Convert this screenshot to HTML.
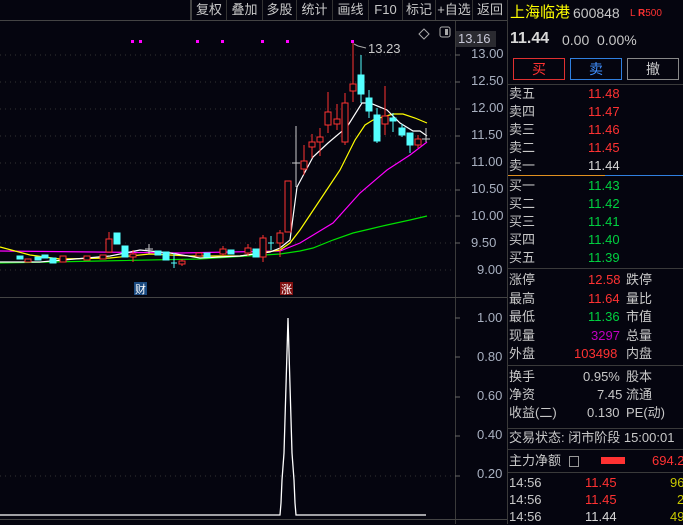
<!DOCTYPE html>
<html><head><meta charset="utf-8"><style>
*{margin:0;padding:0;box-sizing:border-box}
body{width:683px;height:524px;background:#05050f;overflow:hidden;position:relative;font-family:"Liberation Sans","Noto Sans CJK SC",sans-serif;font-size:13px;color:#c8c8c8}
.a{position:absolute;white-space:nowrap;line-height:16px}
.r{color:#ff3232}.g{color:#00d040}.w{color:#d8d8d8}.m{color:#c000c0}.y{color:#c8c800}
.tb{position:absolute;top:0;height:20px;line-height:20px;font-size:13px;color:#c8c8c8;border-left:1px solid #333;text-align:center}
.hl{position:absolute;height:1px;background:#3a3a3a}
</style></head><body>
<!-- toolbar -->
<div class="tb" style="left:190px;width:36px;border-left:2px solid #444">复权</div>
<div class="tb" style="left:226px;width:36px">叠加</div>
<div class="tb" style="left:262px;width:34px">多股</div>
<div class="tb" style="left:296px;width:36px">统计</div>
<div class="tb" style="left:332px;width:36px">画线</div>
<div class="tb" style="left:368px;width:34px">F10</div>
<div class="tb" style="left:402px;width:33px">标记</div>
<div class="tb" style="left:435px;width:37px">+自选</div>
<div class="tb" style="left:472px;width:35px">返回</div>
<div class="hl" style="left:0;top:20px;width:507px;background:#444"></div>
<!-- axes column -->
<div style="position:absolute;left:455px;top:21px;width:1px;height:503px;background:#3a3a3a"></div>
<div style="position:absolute;left:507px;top:0;width:1px;height:524px;background:#3a3a3a"></div>
<div class="hl" style="left:0;top:297px;width:507px;background:#444"></div>
<div class="hl" style="left:0;top:519px;width:507px;background:#444"></div>
<div class="a" style="left:456px;top:31px;width:40px;height:16px;background:#2a2a30;color:#c8c8d8;padding-left:2px">13.16</div>
<div class="a" style="left:471px;top:46px;color:#a8b0c0">13.00</div>
<div class="a" style="left:471px;top:73px;color:#a8b0c0">12.50</div>
<div class="a" style="left:471px;top:100px;color:#a8b0c0">12.00</div>
<div class="a" style="left:471px;top:127px;color:#a8b0c0">11.50</div>
<div class="a" style="left:471px;top:154px;color:#a8b0c0">11.00</div>
<div class="a" style="left:471px;top:181px;color:#a8b0c0">10.50</div>
<div class="a" style="left:471px;top:208px;color:#a8b0c0">10.00</div>
<div class="a" style="left:471px;top:235px;color:#a8b0c0">9.50</div>
<div class="a" style="left:477px;top:262px;color:#a8b0c0">9.00</div>
<div class="a" style="left:477px;top:310px;color:#a8b0c0">1.00</div>
<div class="a" style="left:477px;top:349px;color:#a8b0c0">0.80</div>
<div class="a" style="left:477px;top:388px;color:#a8b0c0">0.60</div>
<div class="a" style="left:477px;top:427px;color:#a8b0c0">0.40</div>
<div class="a" style="left:477px;top:466px;color:#a8b0c0">0.20</div>
<svg style="position:absolute;left:0;top:0" width="507" height="524">
<g stroke="#333" stroke-dasharray="1 4">
<line x1="0" y1="55" x2="455" y2="55"/><line x1="0" y1="82" x2="455" y2="82"/><line x1="0" y1="109" x2="455" y2="109"/><line x1="0" y1="136" x2="455" y2="136"/><line x1="0" y1="163" x2="455" y2="163"/><line x1="0" y1="190" x2="455" y2="190"/><line x1="0" y1="216" x2="455" y2="216"/><line x1="0" y1="243" x2="455" y2="243"/><line x1="0" y1="270" x2="455" y2="270"/>
<line x1="0" y1="476" x2="455" y2="476"/>
</g>
<g stroke="#666"><line x1="455" y1="55" x2="460" y2="55"/><line x1="455" y1="82" x2="460" y2="82"/><line x1="455" y1="109" x2="460" y2="109"/><line x1="455" y1="136" x2="460" y2="136"/><line x1="455" y1="163" x2="460" y2="163"/><line x1="455" y1="190" x2="460" y2="190"/><line x1="455" y1="216" x2="460" y2="216"/><line x1="455" y1="243" x2="460" y2="243"/><line x1="455" y1="318" x2="460" y2="318"/><line x1="455" y1="357" x2="460" y2="357"/><line x1="455" y1="397" x2="460" y2="397"/><line x1="455" y1="436" x2="460" y2="436"/><line x1="455" y1="476" x2="460" y2="476"/></g>
<g fill="#ff00ff"><rect x="131" y="40" width="3" height="3"/><rect x="139" y="40" width="3" height="3"/><rect x="196" y="40" width="3" height="3"/><rect x="221" y="40" width="3" height="3"/><rect x="261" y="40" width="3" height="3"/><rect x="286" y="40" width="3" height="3"/><rect x="351" y="40" width="3" height="3"/></g>
<path d="M424 29l5 5-5 5-5-5z" fill="none" stroke="#aaa"/>
<rect x="440" y="27" width="10" height="10" rx="2" fill="none" stroke="#aaa"/><rect x="445" y="29" width="3" height="6" fill="#aaa"/>
<path d="M354 44l4 2 8 2" stroke="#aaa" fill="none"/>
<text x="368" y="53" fill="#c8c8c8" font-size="13" font-family="Liberation Sans">13.23</text>
<polyline fill="none" stroke="#00e000" stroke-width="1.2" points="0,263 100,261 200,259 280,254 300,251 313,248 333,240 353,233 370,229 387,225 410,220 427,216"/>
<polyline fill="none" stroke="#ff00ff" stroke-width="1.2" points="0,251 95,252 180,253 280,251 300,243 333,223 360,193 387,170 410,155 427,142"/>
<polyline fill="none" stroke="#ffff00" stroke-width="1.2" points="0,247 30,255 60,259 110,258 150,254 190,256 240,256 280,250 290,243 300,230 320,200 340,170 355,140 365,125 373,120 393,114 403,114 415,118 427,123"/>
<polyline fill="none" stroke="#ffffff" stroke-width="1.2" points="0,262 40,262 110,256 140,250 170,253 200,258 240,256 270,252 280,248 290,240 297,187 313,157 328,143 347,127 362,103 370,103 387,110 400,123 413,131 420,131 427,136"/>
<g stroke="#ff3232" fill="#05050f">
<line x1="109" y1="232" x2="109" y2="252"/><rect x="106" y="239" width="6" height="13"/>
<line x1="133" y1="250" x2="133" y2="262"/><rect x="130" y="254" width="6" height="3"/>
<line x1="182" y1="259" x2="182" y2="266"/><rect x="179" y="261" width="6" height="3"/>
<rect x="196" y="253" width="6" height="3"/><rect x="60" y="256" width="6" height="6"/><rect x="100" y="255" width="6" height="4"/><rect x="25" y="259" width="6" height="3"/><rect x="84" y="256" width="6" height="4"/>
<line x1="223" y1="246" x2="223" y2="256"/><rect x="220" y="249" width="6" height="5"/>
<line x1="248" y1="244" x2="248" y2="256"/><rect x="245" y="248" width="6" height="5"/>
<line x1="263" y1="235" x2="263" y2="262"/><rect x="260" y="238" width="6" height="19"/>
<line x1="280" y1="230" x2="280" y2="257"/><rect x="277" y="233" width="6" height="10"/>
<rect x="285" y="181" width="6" height="51"/>
<line x1="304" y1="145" x2="304" y2="175"/><rect x="301" y="161" width="6" height="8"/>
<line x1="312" y1="134" x2="312" y2="158"/><rect x="309" y="142" width="6" height="5"/>
<line x1="320" y1="128" x2="320" y2="156"/><rect x="317" y="137" width="6" height="5"/>
<line x1="328" y1="92" x2="328" y2="133"/><rect x="325" y="112" width="6" height="13"/>
<line x1="337" y1="104" x2="337" y2="130"/><rect x="334" y="119" width="6" height="5"/>
<line x1="345" y1="93" x2="345" y2="145"/><rect x="342" y="103" width="6" height="39"/>
<line x1="353" y1="43" x2="353" y2="102"/><rect x="350" y="84" width="6" height="7"/>
<line x1="385" y1="86" x2="385" y2="135"/><rect x="382" y="116" width="6" height="8"/>
<line x1="418" y1="135" x2="418" y2="148"/><rect x="415" y="139" width="6" height="6"/>
</g>
<g stroke="#54ffff" fill="#54ffff">
<rect x="114" y="233" width="6" height="11"/><rect x="122" y="246" width="6" height="11"/><rect x="155" y="251" width="6" height="4"/><rect x="163" y="252" width="6" height="8"/><rect x="204" y="253" width="6" height="4"/><rect x="228" y="250" width="6" height="4"/><rect x="253" y="249" width="6" height="8"/><rect x="17" y="256" width="6" height="3"/><rect x="35" y="257" width="6" height="3"/><rect x="50" y="258" width="6" height="5"/><rect x="42" y="255" width="6" height="3"/>
<line x1="174" y1="253" x2="174" y2="268"/><line x1="171" y1="263" x2="177" y2="263"/>
<line x1="271" y1="236" x2="271" y2="250"/><line x1="268" y1="243" x2="274" y2="243"/>
<line x1="361" y1="55" x2="361" y2="103"/><rect x="358" y="75" width="6" height="19"/>
<line x1="369" y1="90" x2="369" y2="118"/><rect x="366" y="98" width="6" height="13"/>
<line x1="377" y1="108" x2="377" y2="143"/><rect x="374" y="115" width="6" height="26"/>
<line x1="393" y1="113" x2="393" y2="132"/><rect x="390" y="118" width="6" height="3"/>
<line x1="402" y1="124" x2="402" y2="137"/><rect x="399" y="128" width="6" height="7"/>
<line x1="410" y1="133" x2="410" y2="153"/><rect x="407" y="133" width="6" height="12"/>
</g>
<g stroke="#ccc"><line x1="296" y1="126" x2="296" y2="187"/><line x1="292" y1="163" x2="300" y2="163"/><line x1="426" y1="128" x2="426" y2="142"/><line x1="422" y1="139" x2="430" y2="139"/><line x1="149" y1="244" x2="149" y2="254"/><line x1="145" y1="249" x2="153" y2="249"/></g>
<rect x="134" y="282" width="13" height="13" fill="#1a4a80"/><text x="135" y="293" fill="#fff" font-size="11" font-family="Noto Sans CJK SC">财</text>
<rect x="280" y="282" width="13" height="13" fill="#801010"/><text x="281" y="293" fill="#fff" font-size="11" font-family="Noto Sans CJK SC">涨</text>
<polyline fill="none" stroke="#fff" stroke-width="1.3" points="0,515 280,515 281,503 282,480 284,453 288,318 292,453 294,480 295,503 296,515 426,515"/>
</svg>
<!-- right panel -->
<div class="a" style="left:510px;top:5px;font-size:15px;color:#ffff00">上海临港</div>
<div class="a" style="left:573px;top:5px;font-size:14px;color:#c8c8c8">600848</div>
<div class="a" style="left:630px;top:6px;font-size:10px;color:#ff3232">L <b>R</b>500</div>
<div class="a" style="left:510px;top:31px;font-size:16px;font-weight:bold;color:#d8d8d8">11.44</div>
<div class="a" style="left:562px;top:32px;font-size:14px">0.00</div>
<div class="a" style="left:597px;top:32px;font-size:14px">0.00%</div>
<div class="a" style="left:513px;top:58px;width:52px;height:22px;border:1px solid #e03030;color:#ff3232;text-align:center;line-height:20px;font-size:14px">买</div>
<div class="a" style="left:570px;top:58px;width:52px;height:22px;border:1px solid #3080e0;color:#4090ff;text-align:center;line-height:20px;font-size:14px">卖</div>
<div class="a" style="left:627px;top:58px;width:52px;height:22px;border:1px solid #888;color:#ccc;text-align:center;line-height:20px;font-size:14px">撤</div>
<div class="hl" style="left:508px;top:84px;width:175px"></div>
<div class="a" style="left:509px;top:86px">卖五</div><div class="a r" style="left:588px;top:86px">11.48</div>
<div class="a" style="left:509px;top:104px">卖四</div><div class="a r" style="left:588px;top:104px">11.47</div>
<div class="a" style="left:509px;top:122px">卖三</div><div class="a r" style="left:588px;top:122px">11.46</div>
<div class="a" style="left:509px;top:140px">卖二</div><div class="a r" style="left:588px;top:140px">11.45</div>
<div class="a" style="left:509px;top:158px">卖一</div><div class="a w" style="left:588px;top:158px">11.44</div>
<div class="hl" style="left:508px;top:175px;width:97px;background:#e09020"></div>
<div class="hl" style="left:605px;top:175px;width:78px;background:#3080e0"></div>
<div class="a" style="left:509px;top:178px">买一</div><div class="a g" style="left:588px;top:178px">11.43</div>
<div class="a" style="left:509px;top:196px">买二</div><div class="a g" style="left:588px;top:196px">11.42</div>
<div class="a" style="left:509px;top:214px">买三</div><div class="a g" style="left:588px;top:214px">11.41</div>
<div class="a" style="left:509px;top:232px">买四</div><div class="a g" style="left:588px;top:232px">11.40</div>
<div class="a" style="left:509px;top:250px">买五</div><div class="a g" style="left:588px;top:250px">11.39</div>
<div class="hl" style="left:508px;top:268px;width:175px"></div>
<div class="a" style="left:509px;top:272px">涨停</div><div class="a r" style="left:588px;top:272px">12.58</div><div class="a" style="left:626px;top:272px">跌停</div>
<div class="a" style="left:509px;top:291px">最高</div><div class="a r" style="left:588px;top:291px">11.64</div><div class="a" style="left:626px;top:291px">量比</div>
<div class="a" style="left:509px;top:309px">最低</div><div class="a g" style="left:588px;top:309px">11.36</div><div class="a" style="left:626px;top:309px">市值</div>
<div class="a" style="left:509px;top:328px">现量</div><div class="a m" style="left:591px;top:328px">3297</div><div class="a" style="left:626px;top:328px">总量</div>
<div class="a" style="left:509px;top:346px">外盘</div><div class="a r" style="left:574px;top:346px">103498</div><div class="a" style="left:626px;top:346px">内盘</div>
<div class="hl" style="left:508px;top:365px;width:175px"></div>
<div class="a" style="left:509px;top:369px">换手</div><div class="a" style="left:583px;top:369px">0.95%</div><div class="a" style="left:626px;top:369px">股本</div>
<div class="a" style="left:509px;top:387px">净资</div><div class="a" style="left:597px;top:387px">7.45</div><div class="a" style="left:626px;top:387px">流通</div>
<div class="a" style="left:509px;top:405px">收益(二)</div><div class="a" style="left:587px;top:405px">0.130</div><div class="a" style="left:626px;top:405px">PE(动)</div>
<div class="hl" style="left:508px;top:428px;width:175px"></div>
<div class="a" style="left:509px;top:430px">交易状态: 闭市阶段 15:00:01</div>
<div class="hl" style="left:508px;top:449px;width:175px"></div>
<div class="a" style="left:509px;top:453px">主力净额</div>
<div style="position:absolute;left:569px;top:456px;width:10px;height:11px;border:1px solid #999"></div>
<div style="position:absolute;left:601px;top:457px;width:24px;height:7px;background:#ff3232"></div>
<div class="a r" style="left:652px;top:453px">694.2</div>
<div class="hl" style="left:508px;top:472px;width:175px"></div>
<div class="a" style="left:509px;top:475px">14:56</div><div class="a r" style="left:585px;top:475px">11.45</div><div class="a y" style="left:670px;top:475px">96</div>
<div class="a" style="left:509px;top:492px">14:56</div><div class="a r" style="left:585px;top:492px">11.45</div><div class="a y" style="left:677px;top:492px">2</div>
<div class="a" style="left:509px;top:509px">14:56</div><div class="a w" style="left:585px;top:509px">11.44</div><div class="a y" style="left:670px;top:509px">49</div>
</body></html>
